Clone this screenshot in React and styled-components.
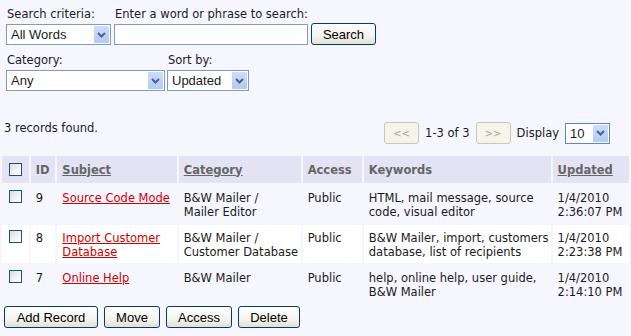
import React from 'react'
import styled, { createGlobalStyle } from 'styled-components'

const GlobalStyle = createGlobalStyle`
  html, body {
    margin: 0;
    padding: 0;
    background: #f6f6ff;
  }
  body {
    font-family: "DejaVu Sans", Verdana, sans-serif;
    font-size: 11.5px;
    color: #1a1a1a;
  }
`

const Page = styled.div`
  padding: 8px 2px 0 2px;
  width: 627px;
`

const FilterRow = styled.div`
  display: flex;
  align-items: flex-end;
  gap: ${p => p.$spacing || 3}px;
  padding-left: 4px;
  margin-bottom: ${p => p.$gap || 0}px;
`

const Field = styled.div`
  display: flex;
  flex-direction: column;
`

const Label = styled.label`
  font-size: 11.5px;
  line-height: 13px;
  margin: 0 0 3px 1px;
  white-space: nowrap;
`

const SelectBox = styled.div`
  position: relative;
  width: ${p => p.$w}px;
  height: 21px;
  box-sizing: border-box;
  border: 1px solid ${p => (p.$focus ? '#5b86c3' : '#7f9db9')};
  background: #fff;
  font-family: "Liberation Sans", Arial, sans-serif;
  font-size: 13px;
  line-height: 19px;
  padding-left: 4px;
  white-space: nowrap;
`

const Arrow = styled.span`
  position: absolute;
  right: 1px;
  top: 1px;
  width: 15px;
  height: 17px;
  background: linear-gradient(#cddcfc, #b4c9f6);
  border-radius: 1px;
  display: flex;
  align-items: center;
  justify-content: center;
`

const TextBox = styled.input`
  width: 194px;
  height: 21px;
  box-sizing: border-box;
  border: 1px solid #7f9db9;
  background: #fff;
  margin: 0;
  padding: 0 3px;
`

const Button = styled.button`
  height: 22px;
  box-sizing: border-box;
  padding: 0;
  width: ${p => p.$w}px;
  border: 1px solid #003c74;
  border-radius: 3px;
  background: linear-gradient(#ffffff 0%, #f4f3ee 60%, #e3e0d4 100%);
  font-family: "Liberation Sans", Arial, sans-serif;
  font-size: 13px;
  color: #000;
  margin: 0;
`

const PagerButton = styled.button`
  width: 35px;
  height: 22px;
  box-sizing: border-box;
  border: 1px solid #cac8bb;
  border-radius: 3px;
  background: #f5f4ea;
  color: #aca899;
  font-family: "DejaVu Sans", Verdana, sans-serif;
  font-size: 10px;
  margin: 0;
  padding: 0;
`

const StatusRow = styled.div`
  display: flex;
  align-items: flex-start;
  justify-content: space-between;
  margin-top: 31px;
  padding-left: 2px;
  height: 22px;
`

const Found = styled.span`
  margin-top: -1px;
`

const Pager = styled.div`
  display: flex;
  align-items: center;
  gap: 6px;
  padding-right: 19px;
`

const Table = styled.table`
  border-collapse: separate;
  border-spacing: 2px;
  margin: 10px 0 0 -2px;
  width: 631px;
`

const Th = styled.th`
  background: #e3e3f4;
  color: #666;
  font-weight: bold;
  text-align: left;
  height: 27px;
  padding: 0 4px 0 5px;
  box-sizing: border-box;
  width: ${p => p.$w}px;
  text-decoration: ${p => (p.$link ? 'underline' : 'none')};
  white-space: nowrap;
`

const Tr = styled.tr`
  background: ${p => (p.$alt ? '#ffffff' : 'transparent')};
`

const Td = styled.td`
  vertical-align: top;
  padding: 6px 2px 3px 5px;
  line-height: 14px;
  height: 29px;
  color: #1a1a1a;
  white-space: nowrap;
`

const CheckCell = styled.td`
  vertical-align: top;
  padding: 5px 0 0 7px;
`

const SubjectLink = styled.a`
  color: #d00000;
  text-decoration: underline;
  cursor: pointer;
`

const Check = styled.span`
  display: block;
  width: 13px;
  height: 13px;
  box-sizing: border-box;
  border: 1px solid #1c5180;
  background: linear-gradient(135deg, #dcdcd7 0%, #f4f4f1 60%, #ffffff 100%);
`

const Actions = styled.div`
  display: flex;
  gap: 6px;
  padding-left: 2px;
  margin-top: 1px;
`

const Chevron = () => (
  <svg width="9" height="6" viewBox="0 0 9 6">
    <path d="M1 1 L4.5 4.5 L8 1" fill="none" stroke="#4d6185" strokeWidth="2" />
  </svg>
)

const Select = ({ w, value, focus }) => (
  <SelectBox $w={w} $focus={focus}>
    {value}
    <Arrow><Chevron /></Arrow>
  </SelectBox>
)

const records = [
  { id: 9, subject: ['Source Code Mode'], category: ['B&W Mailer /', 'Mailer Editor'], access: 'Public', keywords: ['HTML, mail message, source', 'code, visual editor'], updated: ['1/4/2010', '2:36:07 PM'] },
  { id: 8, subject: ['Import Customer', 'Database'], category: ['B&W Mailer /', 'Customer Database'], access: 'Public', keywords: ['B&W Mailer, import, customers', 'database, list of recipients'], updated: ['1/4/2010', '2:23:38 PM'] },
  { id: 7, subject: ['Online Help'], category: ['B&W Mailer'], access: 'Public', keywords: ['help, online help, user guide,', 'B&W Mailer'], updated: ['1/4/2010', '2:14:10 PM'] }
]

const lines = arr => arr.map((l, i) => (
  <React.Fragment key={i}>{i > 0 && <br />}{l}</React.Fragment>
))

export default function App() {
  return (
    <Page>
      <GlobalStyle />
      <FilterRow $gap={9}>
        <Field>
          <Label>Search criteria:</Label>
          <Select w={105} value="All Words" />
        </Field>
        <Field>
          <Label>Enter a word or phrase to search:</Label>
          <TextBox />
        </Field>
        <Button $w={65}>Search</Button>
      </FilterRow>
      <FilterRow $spacing={2}>
        <Field>
          <Label>Category:</Label>
          <Select w={159} value="Any" />
        </Field>
        <Field>
          <Label>Sort by:</Label>
          <Select w={82} value="Updated" />
        </Field>
      </FilterRow>
      <StatusRow>
        <Found>3 records found.</Found>
        <Pager>
          <PagerButton>&lt;&lt;</PagerButton>
          <span>1-3 of 3</span>
          <PagerButton>&gt;&gt;</PagerButton>
          <span>Display</span>
          <Select w={45} value="10" focus />
        </Pager>
      </StatusRow>
      <Table>
        <thead>
          <tr>
            <Th $w={27} style={{ paddingLeft: 7 }}><Check /></Th>
            <Th $w={25}>ID</Th>
            <Th $w={120} $link>Subject</Th>
            <Th $w={122} $link>Category</Th>
            <Th $w={60}>Access</Th>
            <Th $w={184}>Keywords</Th>
            <Th $w={77} $link>Updated</Th>
          </tr>
        </thead>
        <tbody>
          {records.map((r, i) => (
            <Tr key={r.id} $alt={i === 1}>
              <CheckCell><Check /></CheckCell>
              <Td>{r.id}</Td>
              <Td><SubjectLink>{lines(r.subject)}</SubjectLink></Td>
              <Td>{lines(r.category)}</Td>
              <Td>{r.access}</Td>
              <Td>{lines(r.keywords)}</Td>
              <Td>{lines(r.updated)}</Td>
            </Tr>
          ))}
        </tbody>
      </Table>
      <Actions>
        <Button $w={94}>Add Record</Button>
        <Button $w={56}>Move</Button>
        <Button $w={66}>Access</Button>
        <Button $w={62}>Delete</Button>
      </Actions>
    </Page>
  )
}
